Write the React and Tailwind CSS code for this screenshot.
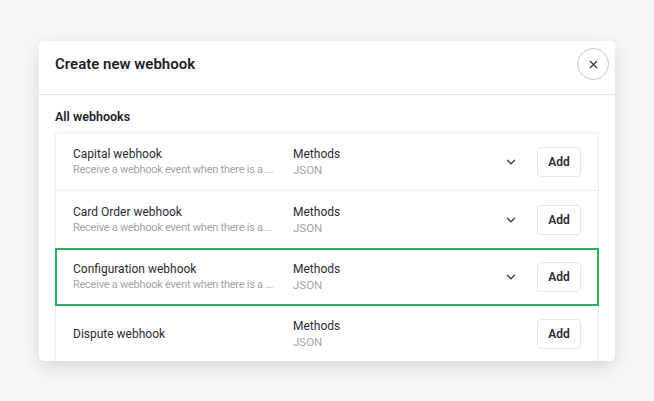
import { ChevronDown, X } from 'lucide-react'

const webhooks = [
  { name: 'Capital webhook', desc: 'Receive a webhook event when there is a ...', expand: true },
  { name: 'Card Order webhook', desc: 'Receive a webhook event when there is a...', expand: true },
  { name: 'Configuration webhook', desc: 'Receive a webhook event when there is a ...', expand: true, active: true },
  { name: 'Dispute webhook', desc: null, expand: false },
]

const Row = ({ item, last }) => (
  <div
    className={`flex items-center h-[58px] ${
      item.active
        ? 'border-2 border-[#23b15b] -mx-px -my-px pl-[16px] pr-[16px]'
        : last
        ? 'pl-[17px] pr-[17px]'
        : 'border-b border-[#ececec] pl-[17px] pr-[17px]'
    }`}
  >
    <div className="w-[220px] flex flex-col justify-center">
      <div className="text-[12px] leading-[16px] text-[#2b2b35]">{item.name}</div>
      {item.desc && (
        <div className="text-[11px] leading-[16px] tracking-[-0.25px] text-[#a3a3a8] whitespace-nowrap">
          {item.desc}
        </div>
      )}
    </div>
    <div className="flex-1 flex flex-col">
      <div className="text-[12px] leading-[16px] text-[#2b2b35]">Methods</div>
      <div className="text-[11.5px] leading-[16px] text-[#a3a3a8]">JSON</div>
    </div>
    {item.expand && <ChevronDown className="w-[14px] h-[14px] text-[#3a3a45] mr-[19px]" strokeWidth={2.2} />}
    <button className="w-[44px] h-[30px] rounded-[4px] border border-[#e6e6ea] bg-white text-[12px] font-semibold text-[#2b2b35]">
      Add
    </button>
  </div>
)

const App = () => {
  return (
    <div
      className="w-[654px] h-[401px] bg-[#f5f6f8] pt-[41px] pl-[39px]"
      style={{ fontFamily: 'Roboto, "Noto Sans", sans-serif' }}
    >
      <div className="w-[576px] h-[320px] bg-white rounded-[5px] shadow-[0_6px_18px_rgba(0,0,0,0.12)] overflow-hidden flex flex-col">
        <div className="h-[54px] flex items-center justify-between pl-[16px] pr-[6px] pb-[7px] border-b border-[#e8e8ec] shrink-0">
          <h1 className="text-[15px] font-semibold text-[#1c1c2b]">Create new webhook</h1>
          <button className="w-[32px] h-[32px] rounded-full border border-[#bfc5ee] flex items-center justify-center">
            <X className="w-[13px] h-[13px] text-[#2b2b35]" strokeWidth={2} />
          </button>
        </div>
        <div className="px-[16px] pt-[14px]">
          <div className="text-[12.5px] font-semibold text-[#1c1c2b] leading-[16px] mb-[7px]">All webhooks</div>
          <div className="border border-[#ececec] rounded-[3px]">
            {webhooks.map((w, i) => (
              <Row key={w.name} item={w} last={i === webhooks.length - 1 || webhooks[i + 1]?.active} />
            ))}
          </div>
        </div>
      </div>
    </div>
  )
}

export default App
